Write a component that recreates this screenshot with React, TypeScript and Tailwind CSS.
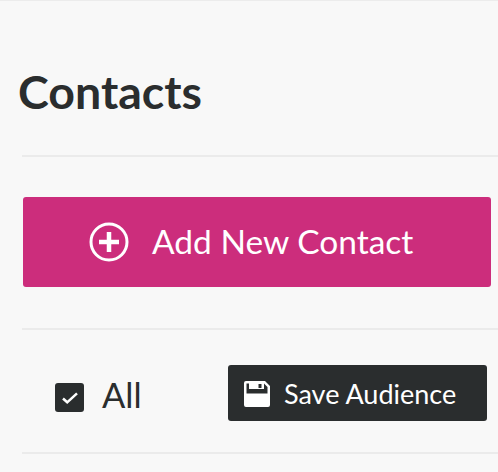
export default function App() {
  return (
    <div className="h-[472px] w-[498px] overflow-hidden border-t border-[#ececec] bg-[#f8f8f8] font-['Lato',sans-serif] text-[#2a2d2e]">
      <h1 className="ml-[18px] mt-[62px] text-[46.500px] font-bold leading-[56px]">Contacts</h1>
      <div className="ml-[22px] mt-[36px] h-[2px] bg-[#ebebeb]" />
      <button className="ml-[23px] mt-[40px] flex h-[90px] w-[468px] items-center gap-[23px] rounded-[3px] bg-[#cc2d7c] pl-[66px] text-[33.5px] text-white">
        <svg width="40" height="40" viewBox="0 0 40 40" fill="none" stroke="currentColor">
          <circle cx="20" cy="20" r="18" strokeWidth="3" />
          <path d="M20 10v20M10 20h20" strokeWidth="4.500" />
        </svg>
        <span className="mb-[2px]">Add New Contact</span>
      </button>
      <div className="ml-[22px] mt-[41px] h-[2px] bg-[#ebebeb]" />
      <div className="ml-[55px] mt-[35px] flex items-center">
        <span className="mt-[9px] flex h-[29px] w-[29px] items-center justify-center rounded-[3px] bg-[#2a2d2e] text-white">
          <svg width="16" height="12" viewBox="0 0 16 12" fill="none" stroke="currentColor" strokeWidth="2.500">
            <path d="M1 6.500l4.200 3.800 9.800-9" />
          </svg>
        </span>
        <span className="ml-[18px] mt-[4px] w-[39px] text-[34.5px] leading-[40px]">All</span>
        <button className="ml-[87px] flex h-[56px] w-[259px] items-center rounded-[3px] bg-[#2a2d2e] pl-[16px] text-[27px] text-white">
          <svg className="mt-[1px]" width="26" height="26" viewBox="0 0 26 26" fill="currentColor">
            <path
              fillRule="evenodd"
              d="M2 0h19l5 5v19a2 2 0 0 1-2 2H2a2 2 0 0 1-2-2V2a2 2 0 0 1 2-2zm.500 2.500v10h21v-6.500l-3.500-3.500v5.500h-15v-5.500zm12 .500v4h3v-4z"
            />
          </svg>
          <span className="ml-[14px] mt-[2px]">Save Audience</span>
        </button>
      </div>
      <div className="ml-[22px] mt-[31px] h-[2px] bg-[#ebebeb]" />
    </div>
  );
}
